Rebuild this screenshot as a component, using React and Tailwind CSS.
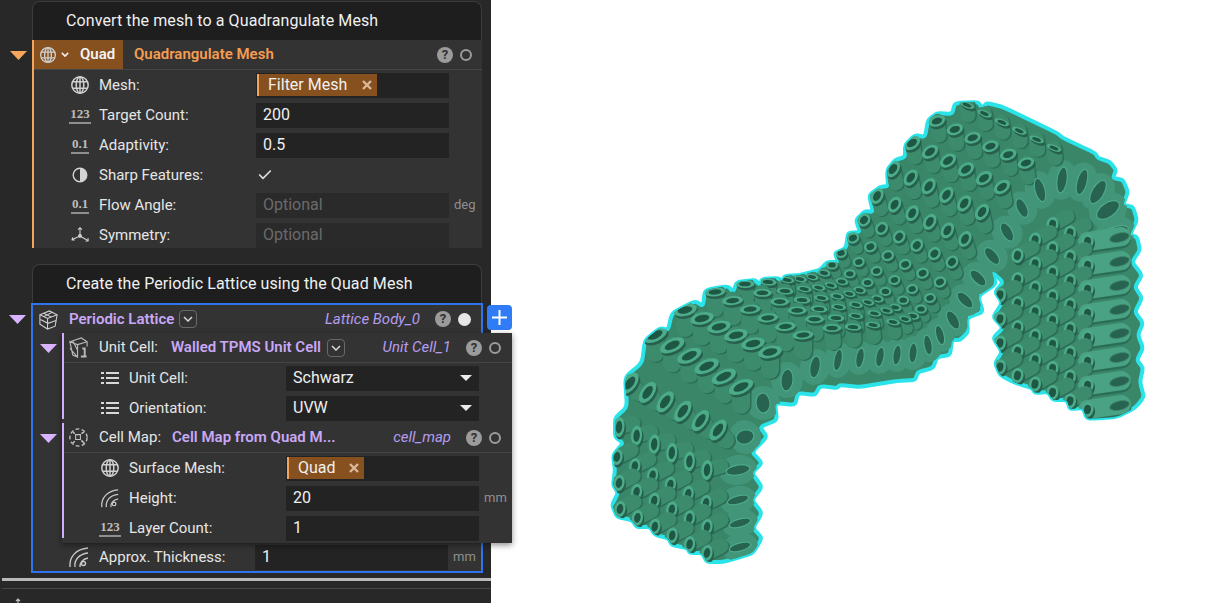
import { Check } from 'lucide-react';

const font = { fontFamily: 'Roboto, "Liberation Sans", sans-serif' };

function GlobeIcon({ className = 'w-[20px] h-[20px]' }) {
  return (
    <svg viewBox="0 0 20 20" className={className} fill="none" stroke="#cfcfcf" strokeWidth="1.5">
      <circle cx="10" cy="10" r="8.2" />
      <ellipse cx="10" cy="10" rx="3.8" ry="8.2" />
      <path d="M2.6 6.8h14.8M2.6 13.2h14.8M10 2v16" />
    </svg>
  );
}

function NumIcon({ children }) {
  return (
    <span className="inline-block border-b-2 border-[#8f8f8f] font-['Liberation_Serif',serif] font-bold text-[13px] leading-[13px] text-[#bdbdbd] px-px pb-[2px]">
      {children}
    </span>
  );
}

function HalfIcon() {
  return (
    <svg viewBox="0 0 20 20" className="w-[20px] h-[20px]">
      <circle cx="10" cy="10" r="6.8" fill="none" stroke="#d4d4d4" strokeWidth="1.4" />
      <path d="M10 3.2a6.8 6.8 0 0 1 0 13.6z" fill="#d4d4d4" />
    </svg>
  );
}

function SymmetryIcon() {
  return (
    <svg viewBox="0 0 22 20" className="w-[22px] h-[20px]" fill="none" stroke="#cfcfcf" strokeWidth="1.2">
      <path d="M11 11V2M8.8 4.2 11 2l2.2 2.2M11 11l-8.5 4M3 12.6l-.8 2.6 2.8.4M11 11l8.5 5M19.8 13.4l.2 3-2.9.4" />
      <circle cx="11" cy="11" r="1.5" fill="#cfcfcf" />
    </svg>
  );
}

function WaveIcon() {
  return (
    <svg viewBox="0 0 22 22" className="w-[22px] h-[22px]" fill="none" stroke="#c8c8c8" strokeWidth="1.4">
      <path d="M2 21C1 11 8 3 20 2" />
      <path d="M7 21C6 14 11 8 20 7" />
      <path d="M12 21c-.5-4 2.500-8 8-9" />
      <circle cx="15.500" cy="17.500" r="2" />
    </svg>
  );
}

function ListIcon() {
  return (
    <svg viewBox="0 0 18 14" className="w-[18px] h-[14px]" fill="#d8d8d8">
      <rect x="0" y="1" width="3" height="2" />
      <rect x="5" y="1" width="13" height="2" />
      <rect x="0" y="6" width="3" height="2" />
      <rect x="5" y="6" width="13" height="2" />
      <rect x="0" y="11" width="3" height="2" />
      <rect x="5" y="11" width="13" height="2" />
    </svg>
  );
}

function LatticeIcon() {
  return (
    <svg viewBox="0 0 22 22" className="w-[21px] h-[21px]" fill="none" stroke="#d0d0d0" strokeWidth="1.1">
      <path d="M2 6 12 2l8 4-1 6-1 6-8 3-8-5z" />
      <path d="M2 6l8 4 10-4M10 10l0 11M2.500 11l8 4 8.500-3M6 4.500l8 4M15 3.500 6 8" />
    </svg>
  );
}

function UnitCellIcon() {
  return (
    <svg viewBox="0 0 22 22" className="w-[21px] h-[21px]" fill="none" stroke="#b8b8b8" strokeWidth="1.2">
      <path d="M2 5 14 1l6 4v5M2 5l3 14 5 2V8L2 5zM10 8l10-3M2 12l8 9M5 4l5 10" />
      <path d="M15 12h2.500v8M13.500 20.500h6" strokeWidth="2" />
    </svg>
  );
}

function CellMapIcon() {
  return (
    <svg viewBox="0 0 22 22" className="w-[21px] h-[21px]" fill="none" stroke="#c4c4c4" strokeWidth="1.4">
      <circle cx="11" cy="11" r="9" strokeDasharray="4 2.500" />
      <path d="M8 8h5v5H8z" strokeWidth="1.100" />
      <path d="M5 5l2 2M17 5l-3 2M5 17l2-2M17 17l-3-3" strokeWidth="1.600" />
    </svg>
  );
}

function Tri({ color, className = 'w-[17px] h-[9px]' }) {
  return (
    <svg viewBox="0 0 15 8" className={className} preserveAspectRatio="none">
      <path d="M0 0h15L7.500 8z" fill={color} />
    </svg>
  );
}

function Help() {
  return (
    <span className="block w-[16px] h-[16px] rounded-full bg-[#9b9b9b] text-[#303030] text-[13px] font-bold leading-[16px] text-center shrink-0">?</span>
  );
}

function Status({ on }) {
  return on
    ? <span className="block w-[13px] h-[13px] rounded-full bg-[#e6e6e6] shrink-0" />
    : <span className="block w-[12px] h-[12px] rounded-full border-[2.5px] border-[#9b9b9b] shrink-0" />;
}

function ChevronBox() {
  return (
    <span className="w-[18px] h-[18px] rounded-[4px] border border-[#6a6a6a] flex items-center justify-center shrink-0">
      <svg viewBox="0 0 10 6" className="w-[10px] h-[6px]" fill="none" stroke="#d8d8d8" strokeWidth="1.500">
        <path d="M1 1l4 4 4-4" />
      </svg>
    </span>
  );
}

function Chip({ label, width }) {
  return (
    <div className={`h-[22px] ${width} bg-[#86501f] border-l-2 border-[#f2a55c] flex items-center justify-between pl-[9px] pr-[5px] text-[16px] text-[#f0f0f0]`}>
      <span>{label}</span>
      <svg viewBox="0 0 10 10" className="w-[10px] h-[10px]" stroke="#d9b999" strokeWidth="2.400">
        <path d="M1 1l8 8M9 1l-8 8" />
      </svg>
    </div>
  );
}

function Input({ children, muted, caret }) {
  return (
    <div className={`w-[193px] h-[25px] shrink-0 flex items-center justify-between text-[16px] ${muted ? 'bg-[#2a2a2a] text-[#6a6a6a]' : 'bg-[#232323] text-[#efefef]'} ${children && children.type ? '' : 'px-[7px]'}`}>
      {children}
      {caret && <Tri color="#ececec" className="w-[12px] h-[6px] mr-[7px]" />}
    </div>
  );
}

function Field({ icon, label, unit, labelWidth = 'w-[157px]', iconPad = 'pl-[36px]', rowClass = 'h-[30px]', children }) {
  return (
    <div className={`flex items-center text-[15px] text-[#e6e6e6] ${iconPad} ${rowClass}`}>
      <span className="w-[20px] flex justify-center shrink-0">{icon}</span>
      <span className={`ml-[9px] shrink-0 ${labelWidth}`}>{label}</span>
      {children}
      {unit && <span className="ml-[5px] text-[13px] text-[#8f8f8f]">{unit}</span>}
    </div>
  );
}

function CardTitle({ children }) {
  return (
    <div className="ml-[32px] mr-[9px] h-[39px] flex items-center pl-[33px] bg-[#1e1e1e] border border-b-0 border-[#3c3c3c] rounded-t-lg text-[16px] tracking-[0.1px] text-[#f0f0f0]">
      {children}
    </div>
  );
}

function SubHeader({ icon, label, name, title, titleClass, chevron }) {
  return (
    <div className="h-[30px] flex items-center border-b border-[#454545] text-[15px]">
      <span className="ml-[4px] w-[21px] flex justify-center shrink-0">{icon}</span>
      <span className="ml-[10px] shrink-0 text-[#e6e6e6]">{label}</span>
      <span className={`font-semibold text-[#c9a8f7] ${titleClass}`}>{title}</span>
      {chevron && <span className="ml-[6px]"><ChevronBox /></span>}
      <span className="ml-auto italic text-[#b59cf0]">{name}</span>
      <span className="ml-[15px]"><Help /></span>
      <span className="ml-[7px] mr-[11px]"><Status /></span>
    </div>
  );
}

const outline = [[645,340],[660,328],[668,330],[672,313],[695,301],[703,306],[705,290],[728,286],[733,292],[737,282],[755,280],[760,285],[762,279],[778,278],[782,281],[785,276],[800,275],[808,273],[820,270],[827,262],[838,262],[835,253],[846,248],[848,233],[860,232],[856,220],[865,211],[873,212],[869,195],[880,187],[888,186],[887,170],[895,160],[905,157],[905,145],[915,135],[925,137],[928,120],[937,113],[952,114],[955,103],[978,102],[982,108],[987,103],[1003,107],[1057,133],[1063,138],[1095,153],[1098,158],[1110,162],[1116,170],[1113,178],[1123,180],[1128,192],[1123,205],[1133,207],[1137,220],[1130,235],[1137,237],[1140,250],[1132,262],[1142,275],[1135,287],[1142,298],[1135,312],[1143,323],[1138,335],[1143,348],[1137,360],[1143,368],[1140,382],[1144,397],[1135,408],[1117,417],[1087,419],[1083,408],[1070,409],[1067,400],[1053,400],[1048,392],[1035,393],[1032,388],[1013,382],[1000,375],[995,363],[1002,352],[993,338],[1003,328],[993,317],[1002,303],[995,292],[1003,282],[992,272],[996,284],[978,296],[983,312],[967,318],[968,332],[960,340],[952,340],[950,355],[937,357],[933,368],[918,372],[915,380],[897,381],[878,384],[860,387],[840,385],[837,388],[820,386],[815,395],[798,393],[795,405],[775,403],[777,420],[760,427],[767,437],[752,452],[762,463],[752,473],[762,487],[752,500],[762,513],[753,528],[762,538],[753,553],[737,558],[723,562],[707,562],[702,553],[690,553],[687,548],[672,545],[668,538],[655,535],[650,527],[637,527],[632,520],[617,517],[612,505],[618,493],[613,485],[615,470],[613,455],[623,443],[615,437],[615,418],[627,407],[625,377],[642,363]];

// startx, starty, endx, endy, rx, ry, rot, tube dx, tube dy, tube width
const rows = [
  [967,105,1054,148,7.500,3,22,1,10,15],
  [937,121,1026,163,8.500,5.500,-18,2,14,15],
  [912,143,1002,187,9,6,-35,3,14,15],
  [893,169,982,212,9,6,-55,3,14,15],
  [877,196,965,239,8.500,6,-60,4,13,14],
  [864,220,952,262,7,6,-50,4,11,13],
  [853,238,940,282,6.500,5.500,-20,4,10,12],
  [841,253,930,298,6,5,-10,4,9,11],
  [832,265,921,309,6,4.500,0,4,8,10],
  [824,273,913,316,6.500,3.500,10,3,8,11],
  [812,277,905,319,6.500,3,12,2,9,12],
  [800,279,893,322,7,3,10,2,11,13],
  [787,280,873,325,7.500,3,8,1,12,14],
  [768,282,853,327,8.500,3.500,5,1,13,15],
  [745,284,832,328,9.500,4,0,1,14,16],
  [715,292,803,335,10.500,4.500,-5,0,16,18],
  [685,310,770,352,12,6,-12,0,18,18],
  [655,335,741,387,13,6.500,-25,0,18,18],
  [630,383,718,430,12,6.500,-55,8,10,17],
  [619,427,707,470,10,5.500,-85,14,-4,15],
  [617,457,706,503,8,5.500,-80,14,-7,15],
  [619,483,707,527,8,5.500,-80,14,-7,15],
  [620,509,707,553,8,5.500,-80,14,-7,15],
];

const bigEyes = [[1062,180,5,13,8],[1040,190,5,12,-15],[1082,182,5,13,15],[1098,192,6,13,30],[1108,210,7,13,55],[1115,233,6,14,70],[1022,208,5,10,-25],[1007,232,5,10,-30],[992,256,5,10,-40],[978,278,5,10,-45],[965,300,5,10,-45],[953,320,5,10,-30],[940,335,4,10,-15],[928,345,4,10,-10],[913,353,4,10,5],[897,355,4,10,8],[880,357,4,10,10],[860,358,4,10,10],[838,360,4,11,10],[815,367,5,11,10],[787,380,6,11,5],[763,403,7,10,-5],[745,437,7,9,75],[738,470,5,12,80],[738,500,4,11,75],[740,523,4,11,75],[740,547,4,11,75]];

const legRange = [[0,3],[-2,3],[-3,3],[-4,3],[-4,3],[-4,3]];

// rounds each corner only a little so the bumps of the outline stay sharp
function softOutline(points) {
  const lerp = (a, b, t) => [a[0] + (b[0] - a[0]) * t, a[1] + (b[1] - a[1]) * t];
  let d = '';
  points.forEach((p, i) => {
    const prev = points[(i - 1 + points.length) % points.length];
    const next = points[(i + 1) % points.length];
    const a = lerp(p, prev, 0.25);
    const b = lerp(p, next, 0.25);
    d += `${i === 0 ? 'M' : 'L'}${a[0]} ${a[1]}Q${p[0]} ${p[1]} ${b[0]} ${b[1]}`;
  });
  return d + 'Z';
}

function Ring({ x, y, rx, ry, rot }) {
  return (
    <g>
      <ellipse cx={x + 1.500} cy={y + 2.500} rx={rx} ry={ry} fill="#27614d" transform={`rotate(${rot} ${x + 1.500} ${y + 2.500})`} />
      <g transform={`translate(${x} ${y}) rotate(${rot})`}>
        <ellipse rx={rx} ry={ry} fill="#4cab89" />
        <ellipse rx={rx * 0.62} ry={ry * 0.58} fill="#1f5745" />
      </g>
    </g>
  );
}

function Tube({ x, y, dx, dy, w }) {
  return (
    <g strokeLinecap="round">
      <line x1={x + 1.500} y1={y + 1} x2={x + dx + 1.500} y2={y + dy + 1} stroke="#2b6d57" strokeWidth={w} />
      <line x1={x} y1={y} x2={x + dx} y2={y + dy} stroke="#3d8b6d" strokeWidth={w} />
    </g>
  );
}

function LatticeModel() {
  const d = softOutline(outline);
  const archCells = [];
  rows.forEach((r, i) => {
    for (let c = 0; c < 6; c++) {
      const t = c / 5;
      archCells.push({
        key: `a${i}-${c}`,
        x: r[0] + (r[2] - r[0]) * t,
        y: r[1] + (r[3] - r[1]) * t,
        rx: r[4], ry: r[5], rot: r[6], dx: r[7], dy: r[8], w: r[9],
      });
    }
  });
  const legCells = [];
  legRange.forEach(([from, to], c) => {
    for (let rr = from; rr <= to; rr++) {
      legCells.push({ key: `l${c}-${rr}`, x: 1000 + 17.500 * c, y: 295 + 8.500 * c + 24 * rr, c, r: rr });
    }
  });
  legCells.sort((a, b) => a.r - b.r || a.c - b.c);

  return (
    <svg viewBox="491 0 725 603" className="block w-full h-full">
      <defs>
        <clipPath id="model"><path d={d} /></clipPath>
      </defs>
      <path d={d} fill="#3a8669" stroke="#2be4ea" strokeWidth="4" strokeLinejoin="round" />
      <g clipPath="url(#model)">
        {bigEyes.map(([x, y, ry, rx, rot], i) => (
          <g key={`b${i}`} transform={`translate(${x} ${y}) rotate(${rot + 90})`}>
            <ellipse rx={rx + 7} ry={ry + 10} fill="#429578" />
          </g>
        ))}
        {archCells.map((c) => (
          <g key={c.key}>
            <Tube {...c} />
            <Ring {...c} />
          </g>
        ))}
        {bigEyes.map(([x, y, ry, rx, rot], i) => (
          <ellipse key={`h${i}`} cx={x} cy={y} rx={ry} ry={rx} fill="#276350" stroke="#4cab89" strokeWidth="1.200" transform={`rotate(${rot} ${x} ${y})`} />
        ))}
        {legCells.map((c) => (
          <g key={c.key}>
            {c.c === 5 && <line x1={c.x + 2} y1={c.y + 1.500} x2={c.x + 34} y2={c.y - 3} stroke="#2b6d57" strokeWidth="20" strokeLinecap="round" />}
            {c.c === 5 && <line x1={c.x} y1={c.y} x2={c.x + 34} y2={c.y - 5} stroke="#49a283" strokeWidth="19" strokeLinecap="round" />}
            {c.c === 5 && (
              <ellipse cx={c.x + 32} cy={c.y - 4} rx="10" ry="4.500" fill="#276350" stroke="#3a8669" strokeWidth="1" transform={`rotate(-14 ${c.x + 32} ${c.y - 4})`} />
            )}
            {c.c < 5 && <Tube x={c.x} y={c.y} dx={15} dy={-8} w={14} />}
            <Ring x={c.x} y={c.y} rx={7.500} ry={6} rot={-80} />
          </g>
        ))}
      </g>
    </svg>
  );
}

export default function App() {
  return (
    <div className="w-[1216px] h-[603px] flex bg-white overflow-hidden" style={font}>
      <aside className="relative z-10 w-[491px] h-full shrink-0 bg-[#282828] pt-px">
        <CardTitle>Convert the mesh to a Quadrangulate Mesh</CardTitle>

        <div className="flex">
          <div className="w-[32px] h-[30px] flex items-center justify-center pl-[4px] shrink-0">
            <Tri color="#f7a65e" />
          </div>
          <div className="w-[450px] h-[208px] bg-[#333333] border-l-2 border-[#f2a55c] overflow-hidden">
            <div className="h-[30px] flex items-center border-b border-[#454545]">
              <div className="h-full w-[89px] bg-[#86501f] flex items-center pl-[5px] shrink-0">
                <GlobeIcon className="w-[18px] h-[18px]" />
                <svg viewBox="0 0 10 6" className="w-[8px] h-[5px] ml-[4px]" fill="none" stroke="#eee" strokeWidth="2">
                  <path d="M1 1l4 4 4-4" />
                </svg>
                <span className="ml-[11px] font-semibold text-[15px] text-[#f2f2f2]">Quad</span>
              </div>
              <span className="ml-[11px] font-semibold text-[15px] text-[#f79d50]">Quadrangulate Mesh</span>
              <span className="ml-auto"><Help /></span>
              <span className="ml-[7px] mr-[10px]"><Status /></span>
            </div>
            <Field icon={<GlobeIcon />} label="Mesh:">
              <div className="w-[193px] h-[25px] bg-[#232323] flex items-center pl-px"><Chip label="Filter Mesh" width="w-[120px]" /></div>
            </Field>
            <Field icon={<NumIcon>123</NumIcon>} label="Target Count:"><Input>200</Input></Field>
            <Field icon={<NumIcon>0.1</NumIcon>} label="Adaptivity:"><Input>0.5</Input></Field>
            <Field icon={<HalfIcon />} label="Sharp Features:">
              <Check className="ml-[1px] w-[16px] h-[16px] text-[#dcdcdc]" strokeWidth={2.5} />
            </Field>
            <Field icon={<NumIcon>0.1</NumIcon>} label="Flow Angle:" unit="deg"><Input muted>Optional</Input></Field>
            <Field icon={<SymmetryIcon />} label="Symmetry:"><Input muted>Optional</Input></Field>
          </div>
        </div>

        <div className="mt-[16px]">
          <CardTitle>Create the Periodic Lattice using the Quad Mesh</CardTitle>
        </div>

        <div className="flex">
          <div className="w-[31px] h-[32px] flex items-center justify-center pl-[4px] shrink-0">
            <Tri color="#d9b3ff" />
          </div>
          <div className="relative w-[452px] h-[270px] bg-[#333333] border-2 border-[#2f74ee]">
            <div className="h-[28px] flex items-center text-[15px]">
              <span className="ml-[5px] w-[21px] flex justify-center shrink-0"><LatticeIcon /></span>
              <span className="ml-[10px] font-semibold text-[#c9a8f7]">Periodic Lattice</span>
              <span className="ml-[5px]"><ChevronBox /></span>
              <span className="ml-auto italic text-[#b59cf0]">Lattice Body_0</span>
              <span className="ml-[15px]"><Help /></span>
              <span className="ml-[7px] mr-[10px]"><Status on /></span>
            </div>

            <button className="absolute left-[454px] top-0 w-[25px] h-[25px] rounded-[4px] bg-[#2f7cf6] flex items-center justify-center">
              <svg viewBox="0 0 15 15" className="w-[15px] h-[15px]" stroke="#fff" strokeWidth="2">
                <path d="M7.500 0v15M0 7.500h15" />
              </svg>
            </button>

            <div className="relative z-10 ml-[29px] -mr-[31px] w-[450px] h-[210px] bg-[#333333] shadow-[0_2px_6px_rgba(0,0,0,0.45)] flex flex-col">
              <div className="relative h-[86px] border-l-2 border-[#d0aefc] mb-[4px]">
                <span className="absolute -left-[24px] top-[11px]"><Tri color="#d9b3ff" /></span>
                <SubHeader icon={<UnitCellIcon />} label="Unit Cell:" title="Walled TPMS Unit Cell" titleClass="ml-[13px]" name="Unit Cell_1" chevron />
                <Field icon={<ListIcon />} label="Unit Cell:">
                  <Input caret><span className="pl-[7px]">Schwarz</span></Input>
                </Field>
                <Field icon={<ListIcon />} label="Orientation:" rowClass="h-[26px] pt-[4px]">
                  <Input caret><span className="pl-[7px]">UVW</span></Input>
                </Field>
              </div>
              <div className="relative h-[115px] border-l-2 border-[#d0aefc]">
                <span className="absolute -left-[24px] top-[11px]"><Tri color="#d9b3ff" /></span>
                <SubHeader icon={<CellMapIcon />} label="Cell Map:" title="Cell Map from Quad M..." titleClass="ml-[11px]" name="cell_map" />
                <Field icon={<GlobeIcon />} label="Surface Mesh:">
                  <div className="w-[193px] h-[25px] bg-[#232323] flex items-center pl-px"><Chip label="Quad" width="w-[77px]" /></div>
                </Field>
                <Field icon={<WaveIcon />} label="Height:" unit="mm"><Input>20</Input></Field>
                <Field icon={<NumIcon>123</NumIcon>} label="Layer Count:" rowClass="h-[25px] pt-[5px]"><Input>1</Input></Field>
              </div>
            </div>

            <div className="h-[28px] flex items-center text-[15px] text-[#e6e6e6] pl-[35px]">
              <span className="w-[22px] flex justify-center shrink-0"><WaveIcon /></span>
              <span className="ml-[9px] w-[156px] shrink-0">Approx. Thickness:</span>
              <Input>1</Input>
              <span className="ml-[5px] text-[13px] text-[#8f8f8f]">mm</span>
            </div>
          </div>
        </div>

        <div className="mt-[5px] ml-[2px] h-[3px] bg-[#b9b9b9]" />
        <div className="mt-[7px] ml-[2px] h-px bg-[#484848]" />
        <svg viewBox="0 0 12 6" className="ml-[12px] mt-[9px] w-[12px] h-[6px]" fill="none" stroke="#bbb" strokeWidth="1.200">
          <path d="M6 6V1M4 3l2-2 2 2" />
        </svg>
      </aside>

      <main className="flex-1 h-full">
        <LatticeModel />
      </main>
    </div>
  );
}
